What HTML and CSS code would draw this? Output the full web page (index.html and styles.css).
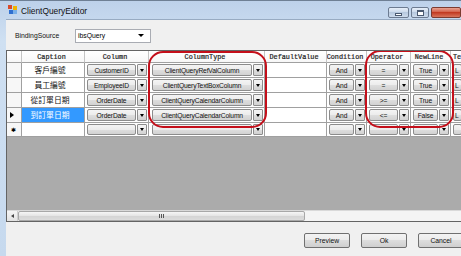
FILE: index.html
```html
<!DOCTYPE html>
<html>
<head>
<meta charset="utf-8">
<link rel="stylesheet" href="styles.css">
</head>
<body>
<div class="window">
  <div class="titlebar">
    <svg class="app-icon" width="10" height="10" viewBox="0 0 10 10">
      <rect x="0" y="0" width="4" height="4" fill="#d94a2b"/>
      <rect x="5" y="1" width="4" height="4" fill="#f0b400"/>
      <rect x="1" y="5" width="4" height="4" fill="#2f6fd0"/>
      <rect x="5" y="5" width="4" height="4" fill="#7ab0e8"/>
    </svg>
    <span class="title">ClientQueryEditor</span>
    <div class="controls">
      <div class="ctl ctl-min"><span class="min-glyph"></span></div>
      <div class="ctl ctl-max"><span class="max-glyph"></span></div>
      <div class="ctl ctl-close"></div>
    </div>
  </div>
  <div class="body">
    <div class="toolbar">
      <span class="label">BindingSource</span>
      <div class="combo"><span>ibsQuery</span><span class="tri"></span></div>
    </div>
    <div class="grid">
      <div class="rows">
        <div class="hc"></div>
        <div class="hc">Caption</div>
        <div class="hc">Column</div>
        <div class="hc">ColumnType</div>
        <div class="hc">DefaultValue</div>
        <div class="hc">Condition</div>
        <div class="hc">Operator</div>
        <div class="hc">NewLine</div>
        <div class="hc hl">Te</div>

        <div class="rh"></div>
        <div class="c cap">客戶編號</div>
        <div class="c cb"><span class="box">CustomerID</span><span class="btn"></span></div>
        <div class="c cb wide"><span class="box">ClientQueryRefValColumn</span><span class="btn"></span></div>
        <div class="c"></div>
        <div class="c cb"><span class="box">And</span><span class="btn"></span></div>
        <div class="c cb"><span class="box">=</span><span class="btn"></span></div>
        <div class="c cb"><span class="box">True</span><span class="btn"></span></div>
        <div class="c cb last"><span class="box lft">L</span></div>

        <div class="rh"></div>
        <div class="c cap">員工編號</div>
        <div class="c cb"><span class="box">EmployeeID</span><span class="btn"></span></div>
        <div class="c cb wide"><span class="box">ClientQueryTextBoxColumn</span><span class="btn"></span></div>
        <div class="c"></div>
        <div class="c cb"><span class="box">And</span><span class="btn"></span></div>
        <div class="c cb"><span class="box">=</span><span class="btn"></span></div>
        <div class="c cb"><span class="box">True</span><span class="btn"></span></div>
        <div class="c cb last"><span class="box lft">L</span></div>

        <div class="rh"></div>
        <div class="c cap">從訂單日期</div>
        <div class="c cb"><span class="box">OrderDate</span><span class="btn"></span></div>
        <div class="c cb wide"><span class="box">ClientQueryCalendarColumn</span><span class="btn"></span></div>
        <div class="c"></div>
        <div class="c cb"><span class="box">And</span><span class="btn"></span></div>
        <div class="c cb"><span class="box">&gt;=</span><span class="btn"></span></div>
        <div class="c cb"><span class="box">True</span><span class="btn"></span></div>
        <div class="c cb last"><span class="box lft">L</span></div>

        <div class="rh"><span class="cur"></span></div>
        <div class="c cap sel">到訂單日期</div>
        <div class="c cb"><span class="box">OrderDate</span><span class="btn"></span></div>
        <div class="c cb wide"><span class="box">ClientQueryCalendarColumn</span><span class="btn"></span></div>
        <div class="c"></div>
        <div class="c cb"><span class="box">And</span><span class="btn"></span></div>
        <div class="c cb"><span class="box">&lt;=</span><span class="btn"></span></div>
        <div class="c cb"><span class="box">False</span><span class="btn"></span></div>
        <div class="c cb last"><span class="box lft">L</span></div>

        <div class="rh nr"><span class="star">✱</span></div>
        <div class="c nr"></div>
        <div class="c cb nr"><span class="box"></span><span class="btn"></span></div>
        <div class="c cb wide nr"><span class="box"></span><span class="btn"></span></div>
        <div class="c nr"></div>
        <div class="c cb nr"><span class="box"></span><span class="btn"></span></div>
        <div class="c cb nr"><span class="box"></span><span class="btn"></span></div>
        <div class="c cb nr"><span class="box"></span><span class="btn"></span></div>
        <div class="c cb last nr"><span class="box"></span></div>
      </div>
      <div class="fill"></div>
      <div class="hscroll">
        <div class="sbtn"><span class="ltri"></span></div>
        <div class="thumb"><span class="grip"></span></div>
        <div class="track"></div>
      </div>
      <div class="oval oval1"></div>
      <div class="oval oval2"></div>
    </div>
    <div class="footer">
      <div class="button">Preview</div>
      <div class="button">Ok</div>
      <div class="button">Cancel</div>
    </div>
  </div>
</div>
</body>
</html>
```

FILE: styles.css
```css
* { box-sizing: border-box; margin: 0; padding: 0; }
html, body { width: 461px; height: 256px; overflow: hidden; }
body {
  font-family: "Liberation Sans", Arial, "Noto Sans CJK TC", sans-serif;
  background: #c9dbef;
  color: #000;
}
.window {
  display: flex;
  flex-direction: column;
  height: 256px;
  width: 461px;
  background: linear-gradient(#bdd1ea, #cfe0f2 40px, #c6d9ee);
  border-top: 1px solid #6e7f94;
  overflow: hidden;
}
.titlebar {
  height: 18px;
  flex: none;
  display: flex;
  align-items: center;
  padding-left: 8px;
}
.app-icon { flex: none; }
.title {
  font-size: 8.4px;
  margin-left: 3px;
  margin-top: 1px;
  color: #111;
}
.controls {
  margin-left: auto;
  display: flex;
  gap: 2px;
  align-self: flex-start;
  margin-top: 6px;
}
.ctl {
  height: 11px;
  border: 1px solid #6c7b91;
  border-radius: 2px;
  background: linear-gradient(#e6eef8, #c9d8ea 50%, #b7c9df 50%, #cddbec);
  display: flex;
  align-items: center;
  justify-content: center;
}
.ctl-min { width: 21px; }
.ctl-max { width: 18px; }
.ctl-close {
  width: 30px;
  background: linear-gradient(#e8a393, #d0573f 50%, #c23a22 50%, #d8755c);
  border-color: #7c3b30;
}
.min-glyph { width: 7px; height: 3px; border: 1px solid #4b5a70; background: #fff; margin-top: 3px; }
.max-glyph { width: 7px; height: 6px; border: 1px solid #4b5a70; border-top-width: 2px; background: #fff; }

.body {
  margin-left: 6px;
  flex: 1;
  background: #f0f0f0;
  display: flex;
  flex-direction: column;
  border-top: 1px solid #98abc2;
}
.toolbar {
  height: 30px;
  flex: none;
  display: flex;
  align-items: center;
  padding-left: 9px;
  padding-top: 1px;
}
.label {
  width: 60px;
  font-size: 6.8px;
  color: #111;
}
.combo {
  width: 76px;
  height: 14px;
  background: #fff;
  border: 1px solid #a9acb3;
  display: flex;
  align-items: center;
  padding-left: 2px;
  padding-right: 6px;
  font-size: 6.8px;
}
.combo .tri {
  margin-left: auto;
  width: 0; height: 0;
  border-left: 3px solid transparent;
  border-right: 3px solid transparent;
  border-top: 3px solid #000;
}

.grid {
  position: relative;
  height: 172px;
  flex: none;
  border: 1px solid #646464;
  border-right: none;
  background: #ababab;
  display: flex;
  flex-direction: column;
  width: 455px;
  overflow: hidden;
}
.rows {
  display: grid;
  grid-template-columns: 15px 63px 64px 116px 62px 40px 44px 40px 12px;
  grid-auto-rows: 15px;
  grid-template-rows: 12px;
}
.hc {
  background: linear-gradient(#ffffff, #f7f7f7);
  border-right: 1px solid #c4c4c4;
  border-bottom: 1px solid #a0a0a0;
  font-family: "Liberation Mono", "DejaVu Sans Mono", monospace;
  font-size: 6.8px;
  font-weight: normal;
  -webkit-text-stroke: 0.2px #222;
  color: #222;
  display: flex;
  align-items: center;
  justify-content: center;
  padding-right: 3px;
  white-space: nowrap;
  overflow: hidden;
}
.hc.hl { justify-content: flex-start; padding-left: 2px; padding-right: 0; border-right: none; }
.rh {
  background: #f7f7f7;
  border-right: 1px solid #a0a0a0;
  border-bottom: 1px solid #a0a0a0;
  display: flex;
  align-items: center;
  padding-left: 3px;
}
.cur {
  width: 0; height: 0;
  border-top: 3px solid transparent;
  border-bottom: 3px solid transparent;
  border-left: 4px solid #000;
}
.star { font-size: 6px; line-height: 1; margin-left: 1px; }
.c {
  background: #fff;
  border-right: 1px solid #a0a0a0;
  border-bottom: 1px solid #a0a0a0;
  overflow: hidden;
}
.nr { height: 14px; }
.cap {
  font-family: "Noto Sans CJK TC", "Noto Sans CJK SC", sans-serif;
  font-size: 7.8px;
  display: flex;
  align-items: center;
  justify-content: center;
  padding-right: 6px;
  color: #111;
  line-height: 1;
}
.cap.sel { background: #3399ff; color: #fff; }
.cb {
  display: flex;
  gap: 1px;
  padding: 1px 1px 1px 2px;
}
.wide { padding-left: 3px; }
.box {
  flex: 1;
  min-width: 0;
  border: 1px solid #8c8c8c;
  border-radius: 2px;
  background: linear-gradient(#f4f4f4, #ececec 50%, #dedede 50%, #d2d2d2);
  font-size: 6.7px;
  letter-spacing: -0.15px;
  color: #111;
  display: flex;
  align-items: center;
  justify-content: center;
  white-space: nowrap;
  overflow: hidden;
}
.box.lft { justify-content: flex-start; padding-left: 1px; }
.btn {
  width: 10px;
  flex: none;
  border: 1px solid #8c8c8c;
  border-radius: 1px;
  background: linear-gradient(#f4f4f4, #ececec 50%, #dedede 50%, #d2d2d2);
  display: flex;
  align-items: center;
  justify-content: center;
}
.btn::after {
  content: "";
  width: 0; height: 0;
  border-left: 2.5px solid transparent;
  border-right: 2.5px solid transparent;
  border-top: 3px solid #000;
}
.last { border-right: none; }
.fill { flex: 1; }
.hscroll {
  height: 11px;
  display: flex;
  background: #ededed;
  border-top: 1px solid #d9d9d9;
}
.sbtn {
  width: 11px;
  background: linear-gradient(#f5f5f5, #e2e2e2);
  border-right: 1px solid #cfcfcf;
  display: flex;
  align-items: center;
  justify-content: center;
}
.ltri {
  width: 0; height: 0;
  border-top: 2px solid transparent;
  border-bottom: 2px solid transparent;
  border-right: 3px solid #444;
}
.thumb {
  width: 287px;
  background: linear-gradient(#f6f6f6, #e4e4e4 50%, #d4d4d4 50%, #dcdcdc);
  border: 1px solid #a8a8a8;
  border-radius: 2px;
  display: flex;
  align-items: center;
  justify-content: center;
}
.grip {
  width: 5px;
  height: 4px;
  background: repeating-linear-gradient(90deg, #555 0 1px, transparent 1px 2px);
}
.track { flex: 1; background: #f4f4f4; }
.oval {
  position: absolute;
  border: 2px solid #c40f1a;
  border-radius: 15px;
  pointer-events: none;
}
.oval1 { left: 141px; top: 0; width: 119px; height: 77px; }
.oval2 { left: 358px; top: -1px; width: 89px; height: 78px; }

.footer {
  flex: 1;
  display: flex;
  align-items: flex-start;
  padding-left: 298px;
  padding-top: 11px;
  gap: 11px;
}
.button {
  width: 46px;
  height: 15px;
  flex: none;
  border: 1px solid #707070;
  border-radius: 2px;
  background: linear-gradient(#f3f3f3, #ebebeb 50%, #dddddd 50%, #cfcfcf);
  font-size: 6.8px;
  display: flex;
  align-items: center;
  justify-content: center;
  color: #111;
}
```
